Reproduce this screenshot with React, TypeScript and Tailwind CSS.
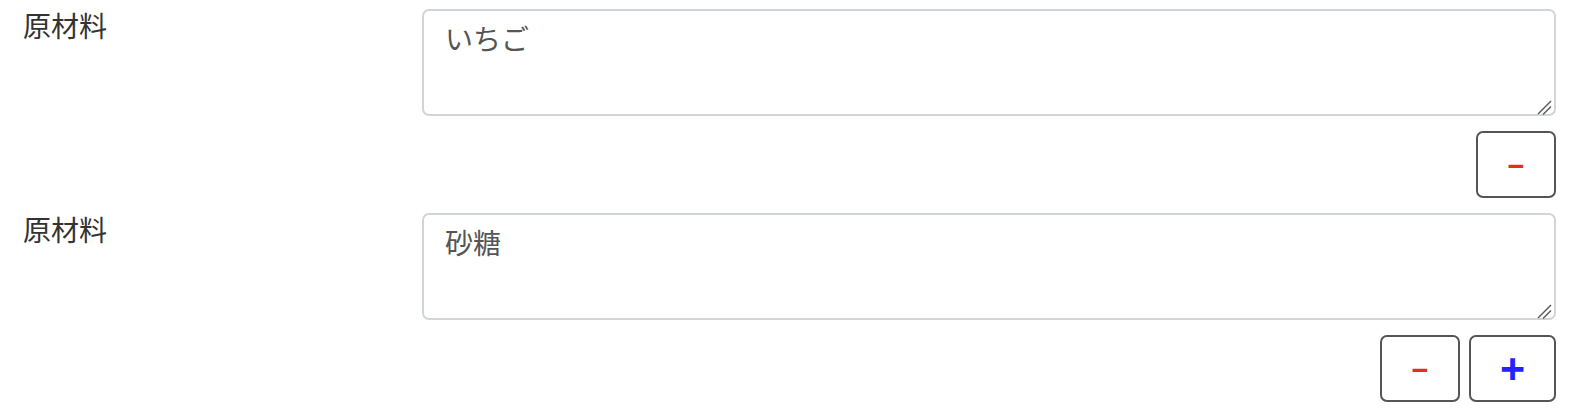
import React from "react";

const jp = { fontFamily: '"Noto Sans CJK JP", "Noto Sans", sans-serif' };

function Grip() {
  return (
    <svg
      className="absolute right-[4px] bottom-[1px] pointer-events-none"
      width="16"
      height="16"
      viewBox="0 0 16 16"
    >
      <line x1="2" y1="15" x2="15" y2="2" stroke="#5a5a5a" strokeWidth="1.4" />
      <line x1="7" y1="15.5" x2="15" y2="7.5" stroke="#5a5a5a" strokeWidth="1.4" />
    </svg>
  );
}

function Row({ value, buttons }: { value: string; buttons: ("minus" | "plus")[] }) {
  return (
    <div className="flex">
      <div className="w-[399px] shrink-0 -mt-[5px] text-[28px] leading-[42px] text-[#333333]" style={jp}>
        原材料
      </div>
      <div className="flex-1 flex flex-col">
        <div className="relative">
          <textarea
            defaultValue={value}
            className="block w-full h-[107px] resize-none rounded-[7px] border-2 border-[#d1d5da] bg-white pl-[21px] pr-[21px] pt-[6px] text-[28px] leading-[42px] text-[#555555] outline-none"
            style={jp}
          />
          <Grip />
        </div>
        <div className="flex justify-end gap-[9px] mt-[15px]">
          {buttons.map((b, i) =>
            b === "minus" ? (
              <button
                key={i}
                className="w-[80px] h-[67px] rounded-[7px] border-2 border-[#555555] bg-white flex items-center justify-center text-[#e0301e] text-[29px] font-bold leading-none pt-[4px]"
                style={{ fontFamily: '"Liberation Sans", sans-serif' }}
              >
                −
              </button>
            ) : (
              <button
                key={i}
                className="w-[87px] h-[67px] rounded-[7px] border-2 border-[#555555] bg-white flex items-center justify-center text-[#2323ff] text-[43px] font-bold leading-none"
                style={{ fontFamily: '"Liberation Sans", sans-serif' }}
              >
                +
              </button>
            )
          )}
        </div>
      </div>
    </div>
  );
}

export default function App() {
  return (
    <div className="w-[1574px] h-[420px] bg-white pl-[23px] pr-[18px] pt-[9px] flex flex-col gap-[15px]">
      <Row value="いちご" buttons={["minus"]} />
      <Row value="砂糖" buttons={["minus", "plus"]} />
    </div>
  );
}
